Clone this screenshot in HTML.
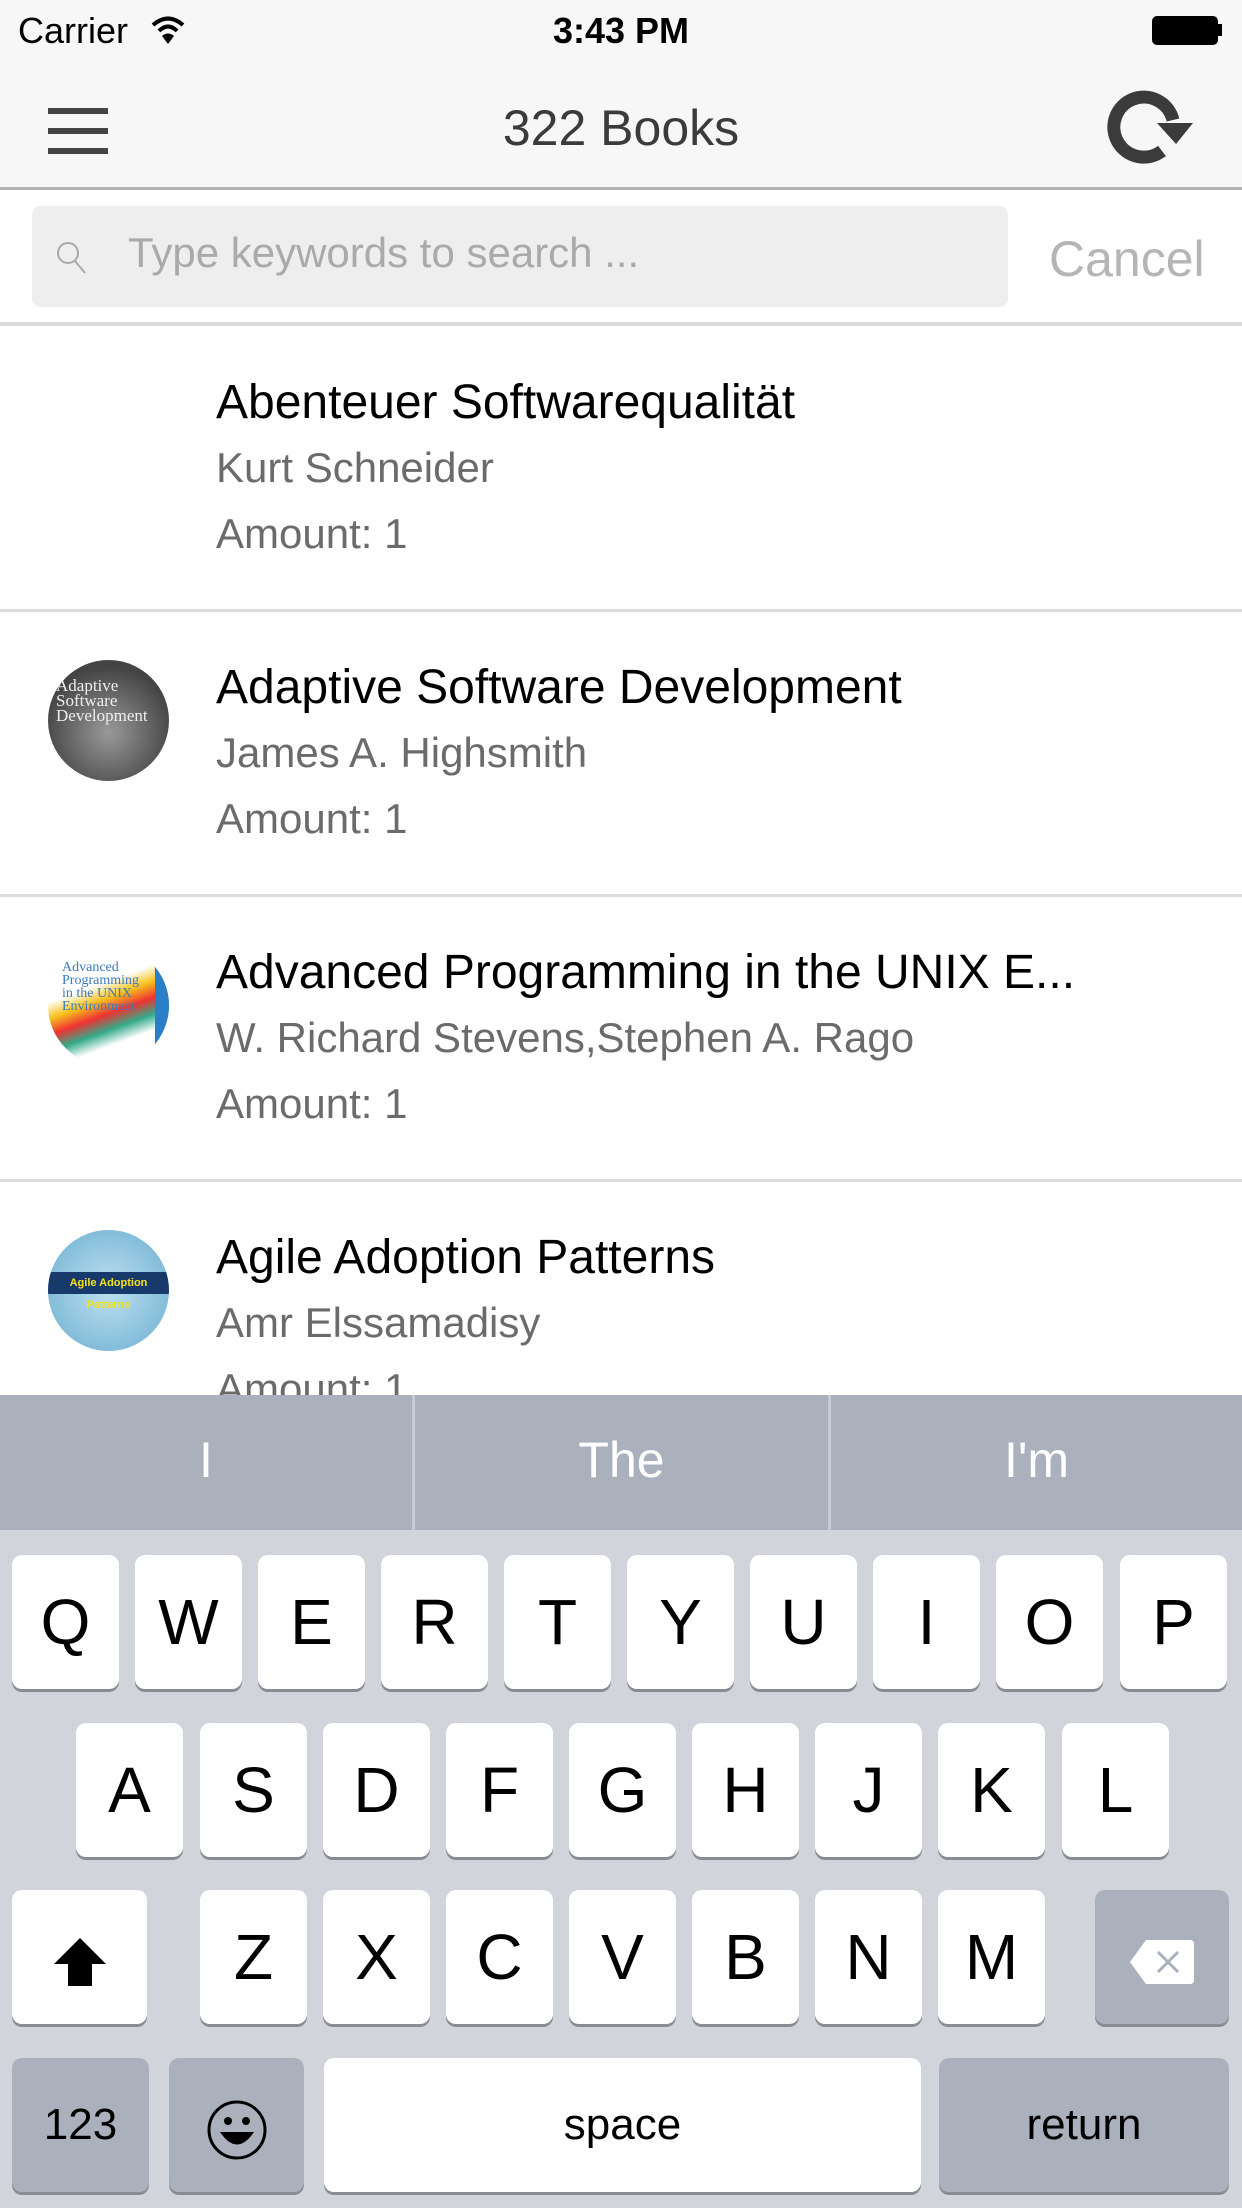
<!DOCTYPE html>
<html><head><meta charset="utf-8"><style>
*{margin:0;padding:0;box-sizing:border-box}
body{width:1242px;height:2208px;overflow:hidden;background:#fff;font-family:"Liberation Sans",sans-serif;position:relative}
.abs{position:absolute}
.nav{left:0;top:0;width:1242px;height:190px;background:#f7f7f7;border-bottom:3px solid #b2b2b2}
.row{left:0;width:1242px;height:284px;border-bottom:3px solid #dcdcdc}
.t{position:absolute;left:216px;font-size:48px;color:#000;white-space:nowrap}
.a{position:absolute;left:216px;font-size:42px;color:#6b6b6b;white-space:nowrap}
.thumb{position:absolute;left:48px;width:121px;height:121px;border-radius:50%;overflow:hidden}
.kb{left:0;top:1395px;width:1242px;height:813px;background:#d1d5db}
.sug{left:0;top:1395px;width:1242px;height:135px;background:#abb1bc}
.sug div{position:absolute;top:0;height:135px;line-height:130px;text-align:center;color:#fff;font-size:50px}
.k{position:absolute;width:107px;height:134px;background:#fff;border-radius:10px;box-shadow:0 3px 0 #888d94;text-align:center;line-height:134px;font-size:64px;color:#000}
.d{background:#abb1bc}
</style></head><body>
<div class="abs nav"></div>
<div class="abs" style="left:18px;top:10px;font-size:36px;color:#000">Carrier</div>
<svg class="abs" style="left:150px;top:14px" width="36" height="32" viewBox="0 0 36 32"><path d="M3 11 Q18 -2 33 11" stroke="#000" stroke-width="4" fill="none"/><path d="M9 17 Q18 8 27 17" stroke="#000" stroke-width="4" fill="none"/><path d="M18 30 L12 22 Q18 17 24 22Z" fill="#000"/></svg>
<div class="abs" style="left:0;width:1242px;top:10px;text-align:center;font-size:36px;font-weight:bold;color:#000">3:43 PM</div>
<div class="abs" style="left:1152px;top:16px;width:66px;height:29px;background:#000;border-radius:5px"></div>
<div class="abs" style="left:1218px;top:24px;width:4px;height:12px;background:#000"></div>
<div class="abs" style="left:48px;top:108px;width:60px;height:6px;background:#444;box-shadow:0 20px 0 #444,0 40px 0 #444"></div>
<div class="abs" style="left:0;width:1242px;top:99px;text-align:center;font-size:50px;color:#3b3b3b">322 Books</div>
<svg class="abs" style="left:1100px;top:80px" width="100" height="90" viewBox="0 0 100 90"><path d="M73 40 A30 30 0 1 0 62 71" stroke="#3b3b3b" stroke-width="13" fill="none"/><path d="M57 43 L93 43 L76 64Z" fill="#3b3b3b"/></svg>
<div class="abs" style="left:32px;top:206px;width:976px;height:101px;background:#eee;border-radius:8px"></div>
<svg class="abs" style="left:55px;top:240px" width="34" height="36" viewBox="0 0 34 36"><circle cx="13" cy="13" r="10" stroke="#aaa" stroke-width="2" fill="none"/><path d="M20 21 L30 33" stroke="#aaa" stroke-width="2"/></svg>
<div class="abs" style="left:128px;top:229px;font-size:42px;color:#aaa">Type keywords to search ...</div>
<div class="abs" style="left:1049px;top:230px;font-size:50px;color:#b5b5b5">Cancel</div>
<div class="abs" style="left:0;top:322px;width:1242px;height:4px;background:#dadada"></div>

<div class="abs row" style="top:328px">
<div class="t" style="top:47px">Abenteuer Softwarequalität</div>
<div class="a" style="top:116px">Kurt Schneider</div>
<div class="a" style="top:182px">Amount: 1</div></div>
<div class="abs row" style="top:613px">
<div class="thumb" style="top:47px;background:radial-gradient(circle at 50% 60%,#999,#444 70%)"><div style="position:absolute;left:8px;top:18px;font-family:'Liberation Serif',serif;color:#eee;font-size:17px;line-height:15px">Adaptive<br>Software<br>Development</div></div>
<div class="t" style="top:47px">Adaptive Software Development</div>
<div class="a" style="top:116px">James A. Highsmith</div>
<div class="a" style="top:182px">Amount: 1</div></div>
<div class="abs row" style="top:898px">
<div class="thumb" style="top:47px;background:linear-gradient(160deg,#fff 35%,#f7c21c 45%,#e33 55%,#3a8 65%,#fff 75%)"><div style="position:absolute;left:14px;top:16px;font-family:'Liberation Serif',serif;color:#3a7bbf;font-size:14px;line-height:13px">Advanced<br>Programming<br>in the UNIX<br>Environment</div><div style="position:absolute;right:0;top:0;width:14px;height:121px;background:#2b7fc6"></div></div>
<div class="t" style="top:47px">Advanced Programming in the UNIX E...</div>
<div class="a" style="top:116px">W. Richard Stevens,Stephen A. Rago</div>
<div class="a" style="top:182px">Amount: 1</div></div>
<div class="abs row" style="top:1183px">
<div class="thumb" style="top:47px;background:radial-gradient(circle,#bfe0f0,#6aaed0)"><div style="position:absolute;left:0;top:42px;width:121px;height:22px;background:#183a6b;color:#f4e21a;font-size:11px;font-weight:bold;line-height:22px;text-align:center">Agile Adoption Patterns</div></div>
<div class="t" style="top:47px">Agile Adoption Patterns</div>
<div class="a" style="top:116px">Amr Elssamadisy</div>
<div class="a" style="top:182px">Amount: 1</div></div>

<div class="abs kb"></div>
<div class="abs sug"><div style="left:0;width:412px">I</div><div style="left:412px;width:3px;background:#c8ccd3"></div><div style="left:415px;width:413px">The</div><div style="left:828px;width:3px;background:#c8ccd3"></div><div style="left:831px;width:411px">I'm</div></div>
<div class="k" style="left:12px;top:1555px">Q</div><div class="k" style="left:135px;top:1555px">W</div><div class="k" style="left:258px;top:1555px">E</div><div class="k" style="left:381px;top:1555px">R</div><div class="k" style="left:504px;top:1555px">T</div><div class="k" style="left:627px;top:1555px">Y</div><div class="k" style="left:750px;top:1555px">U</div><div class="k" style="left:873px;top:1555px">I</div><div class="k" style="left:996px;top:1555px">O</div><div class="k" style="left:1120px;top:1555px">P</div>
<div class="k" style="left:76px;top:1723px">A</div><div class="k" style="left:200px;top:1723px">S</div><div class="k" style="left:323px;top:1723px">D</div><div class="k" style="left:446px;top:1723px">F</div><div class="k" style="left:569px;top:1723px">G</div><div class="k" style="left:692px;top:1723px">H</div><div class="k" style="left:815px;top:1723px">J</div><div class="k" style="left:938px;top:1723px">K</div><div class="k" style="left:1062px;top:1723px">L</div>
<div class="k" style="left:12px;top:1890px;width:135px"><svg width="56" height="56" viewBox="0 0 56 56" style="vertical-align:middle"><path d="M28 4 L54 30 L40 30 L40 52 L16 52 L16 30 L2 30Z" fill="#000"/></svg></div>
<div class="k" style="left:200px;top:1890px">Z</div><div class="k" style="left:323px;top:1890px">X</div><div class="k" style="left:446px;top:1890px">C</div><div class="k" style="left:569px;top:1890px">V</div><div class="k" style="left:692px;top:1890px">B</div><div class="k" style="left:815px;top:1890px">N</div><div class="k" style="left:938px;top:1890px">M</div>
<div class="k d" style="left:1095px;top:1890px;width:134px"><svg width="68" height="48" viewBox="0 0 68 48" style="vertical-align:middle"><path d="M18 2 L62 2 Q66 2 66 6 L66 42 Q66 46 62 46 L18 46 L2 24Z" fill="#fff"/><path d="M30 14 L50 34 M50 14 L30 34" stroke="#abb1bc" stroke-width="3"/></svg></div>
<div class="k d" style="left:12px;top:2058px;width:137px;font-size:44px">123</div>
<div class="k d" style="left:169px;top:2058px;width:135px"><svg width="62" height="62" viewBox="0 0 62 62" style="vertical-align:middle"><circle cx="31" cy="31" r="28" stroke="#000" stroke-width="3" fill="none"/><circle cx="22" cy="22" r="4"/><circle cx="40" cy="22" r="4"/><path d="M14 33 Q31 58 48 33Z" fill="#000"/></svg></div>
<div class="k" style="left:324px;top:2058px;width:597px;font-size:44px">space</div>
<div class="k d" style="left:939px;top:2058px;width:290px;font-size:44px">return</div>
</body></html>
